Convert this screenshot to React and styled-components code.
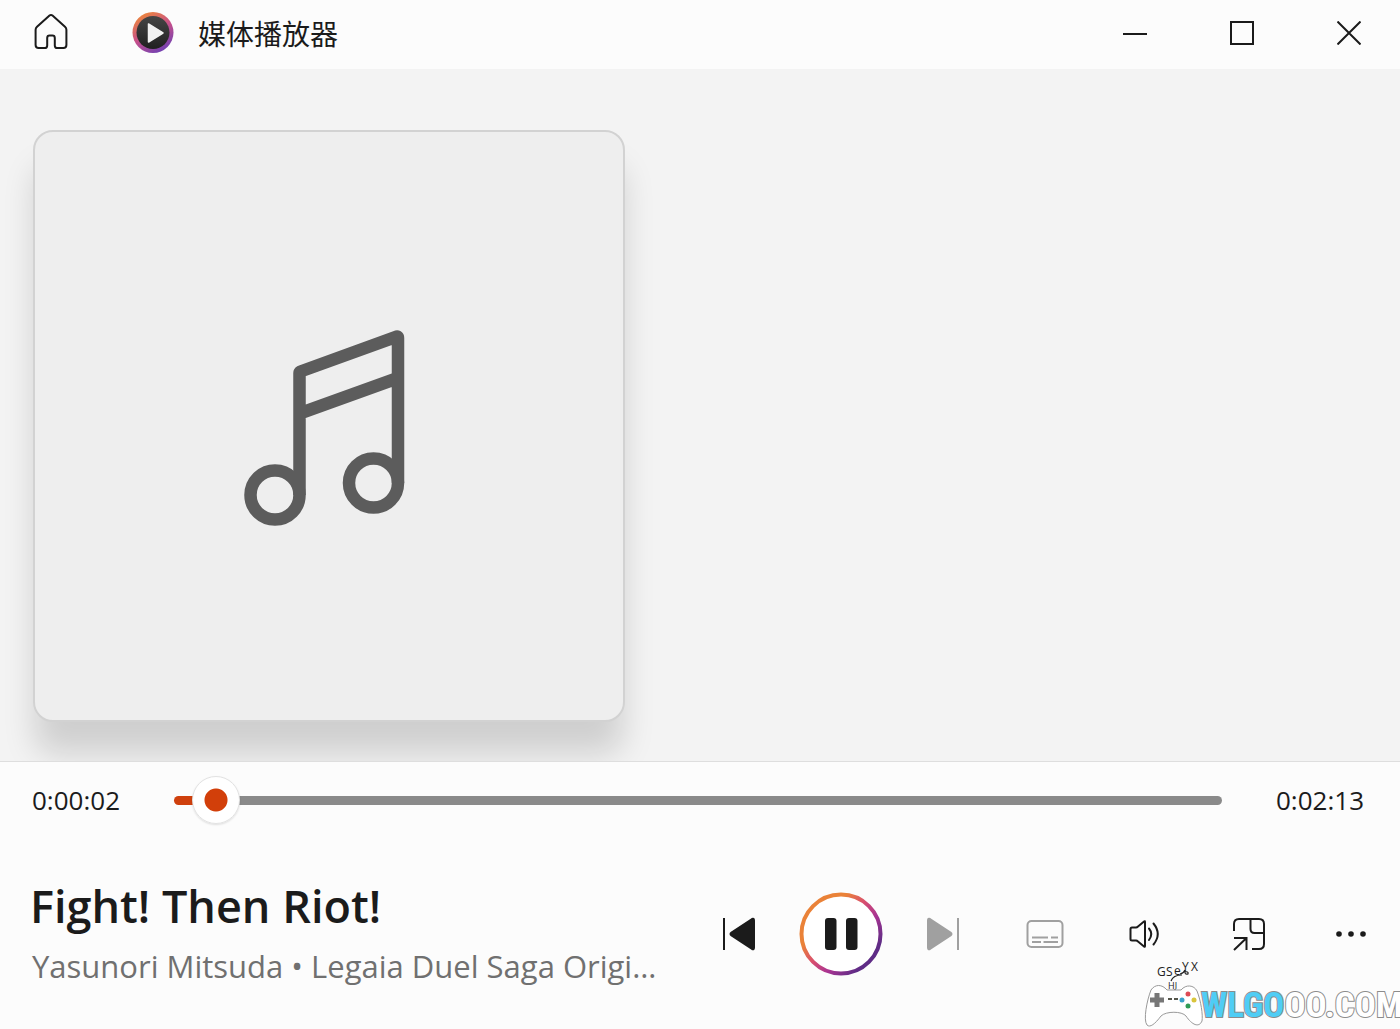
import React, { useState } from "react";
import styled, { createGlobalStyle } from "styled-components";

const GlobalStyle = createGlobalStyle`
  * {
    box-sizing: border-box;
  }
  body {
    margin: 0;
    background: #f3f3f3;
    color: #1b1b1b;
    font-family: "Open Sans", "Noto Sans", "Noto Sans CJK SC", sans-serif;
  }
`;

const Window = styled.div`
  position: relative;
  display: flex;
  flex-direction: column;
  min-height: 100vh;
`;

const TitleBar = styled.header`
  display: flex;
  align-items: center;
  height: 69px;
  padding-bottom: 4px;
  background: #fcfcfc;
`;

const IconButton = styled.button`
  display: flex;
  align-items: center;
  justify-content: center;
  flex: none;
  width: ${({ $width }) => $width || 98}px;
  height: ${({ $height }) => $height || 84}px;
  padding: 0;
  border: 0;
  background: transparent;
  color: ${({ disabled }) => (disabled ? "#a0a0a0" : "#1b1b1b")};
`;

const AppName = styled.div`
  display: flex;
  flex: 1;
  align-items: center;
  gap: 24px;
  padding-left: 30px;
  font-family: "Noto Sans CJK SC", sans-serif;
  font-size: 28px;
  line-height: 40px;
`;

const WindowButtons = styled.div`
  display: flex;
  gap: 5px;
`;

const Stage = styled.main`
  flex: 1;
  padding: 61px 33px 39px;
  overflow: hidden;
  background: #f3f3f3;
`;

const AlbumArt = styled.div`
  display: flex;
  align-items: center;
  justify-content: center;
  width: 592px;
  max-width: 100%;
  aspect-ratio: 1;
  border: 2px solid #d2d2d2;
  border-radius: 20px;
  background: #eeeeee;
  box-shadow: 0 34px 32px -2px rgba(0, 0, 0, 0.15);
`;

const Player = styled.footer`
  border-top: 1px solid #dedede;
  background: #fcfcfc;
`;

const SeekRow = styled.div`
  display: flex;
  align-items: center;
  gap: 54px;
  height: 76px;
  padding: 0 36px 0 32px;
`;

const Time = styled.time`
  flex: none;
  font-size: 26px;
  line-height: 36px;
`;

const Seek = styled.input`
  flex: 1;
  min-width: 0;
  height: 48px;
  margin: 0;
  appearance: none;
  background: transparent;

  &::-webkit-slider-runnable-track {
    height: 9px;
    border-radius: 5px;
    background: linear-gradient(
      to right,
      #cf400d ${({ $played }) => $played}%,
      #8a8a8a ${({ $played }) => $played}%
    );
  }

  &::-webkit-slider-thumb {
    appearance: none;
    width: 48px;
    height: 48px;
    margin-top: -20px;
    border: 1px solid #e2e2e2;
    border-radius: 50%;
    background: radial-gradient(circle, #d23f0a 11px, #ffffff 12px);
    box-shadow: 0 1px 2px rgba(0, 0, 0, 0.12);
  }
`;

const ControlRow = styled.div`
  display: flex;
  align-items: center;
  justify-content: space-between;
  height: 191px;
  padding-left: 30px;
`;

const Track = styled.div`
  flex: 1;
  min-width: 0;
  max-width: 632px;
  padding-top: 4px;
`;

const TrackTitle = styled.h1`
  margin: 0;
  font-size: 45px;
  font-weight: 600;
  line-height: 60px;
  white-space: nowrap;
`;

const TrackInfo = styled.p`
  margin: 0;
  padding-left: 2px;
  overflow: hidden;
  color: #707070;
  font-size: 31px;
  line-height: 60px;
  text-overflow: ellipsis;
  white-space: nowrap;
`;

const Controls = styled.div`
  display: flex;
  flex: none;
  gap: 4px;
`;

const Watermark = styled.div`
  position: absolute;
  right: 0;
  bottom: 0;
  pointer-events: none;

  svg {
    display: block;
    overflow: visible;
  }
`;

const Stroke = ({ width, height, weight = 2, children }) => (
  <svg
    width={width}
    height={height}
    viewBox={`0 0 ${width} ${height}`}
    fill="none"
    stroke="currentColor"
    strokeWidth={weight}
    aria-hidden="true"
  >
    {children}
  </svg>
);

const HomeIcon = () => (
  <Stroke width={36} height={42}>
    <path
      d="M16.5 3.6q1.5-1.3 3 0L32 14.8q1.4 1.3 1.4 3V33q0 3-3 3h-6q-2.6 0-2.6-2.6V26q0-2.4-2.4-2.4h-2.8q-2.4 0-2.4 2.4v7.4q0 2.6-2.6 2.6h-6q-3 0-3-3V17.8q0-1.7 1.4-3z"
      strokeLinejoin="round"
    />
  </Stroke>
);

const AppLogo = () => (
  <svg width="42" height="42" viewBox="0 0 42 42" aria-hidden="true">
    <defs>
      <linearGradient id="logoRing" x1="0.2" y1="0" x2="0.75" y2="1">
        <stop offset="0" stopColor="#ef8a35" />
        <stop offset="0.5" stopColor="#c8508a" />
        <stop offset="1" stopColor="#6b3fb5" />
      </linearGradient>
      <linearGradient id="logoFace" x1="0" y1="0" x2="0" y2="1">
        <stop offset="0" stopColor="#454545" />
        <stop offset="1" stopColor="#202020" />
      </linearGradient>
    </defs>
    <circle cx="21" cy="20.5" r="20.5" fill="url(#logoRing)" />
    <circle cx="21" cy="20.5" r="16.5" fill="url(#logoFace)" />
    <path
      d="M16.5 12v18L31 21z"
      fill="#f1f1f1"
      stroke="#f1f1f1"
      strokeWidth="1.5"
      strokeLinejoin="round"
    />
  </svg>
);

const MinimizeIcon = () => (
  <Stroke width={24} height={24}>
    <path d="M0 13h24" />
  </Stroke>
);

const MaximizeIcon = () => (
  <Stroke width={24} height={24}>
    <rect x="1" y="1" width="22" height="22" />
  </Stroke>
);

const CloseIcon = () => (
  <Stroke width={24} height={24}>
    <path d="M0.5 0.5l23 23M23.5 0.5l-23 23" />
  </Stroke>
);

const NoteIcon = () => (
  <svg
    width="176"
    height="206"
    viewBox="0 0 176 206"
    fill="none"
    stroke="#5c5c5c"
    strokeWidth="12.5"
    strokeLinejoin="round"
    aria-hidden="true"
  >
    <circle cx="34" cy="172" r="24.5" />
    <circle cx="132.5" cy="160" r="24.5" />
    <path d="M58.5 172V50q0-1 1-1.5L155 13.8q2-1 2 1.2v145M58.5 90.5L157 55" />
  </svg>
);

const PreviousIcon = () => (
  <Stroke width={34} height={34}>
    <path d="M2 1v32" />
    <path d="M32 3.5v27q0 2.5-2 1.5L9.5 18.5q-2-1.5 0-3L30 2q2-1 2 1.5z" fill="currentColor" />
  </Stroke>
);

const NextIcon = () => (
  <Stroke width={34} height={34}>
    <path d="M32 1v32" />
    <path d="M2 3.5v27q0 2.5 2 1.5l20.5-13.5q2-1.5 0-3L4 2Q2 1 2 3.5z" fill="currentColor" />
  </Stroke>
);

const PauseIcon = () => (
  <svg width="84" height="84" viewBox="0 0 84 84" aria-hidden="true">
    <defs>
      <linearGradient id="pauseRing" x1="0.15" y1="0.2" x2="0.85" y2="0.8">
        <stop offset="0.2" stopColor="#ea8238" />
        <stop offset="0.45" stopColor="#d94f6e" />
        <stop offset="0.7" stopColor="#a93492" />
        <stop offset="1" stopColor="#5f2c86" />
      </linearGradient>
    </defs>
    <circle cx="42" cy="42" r="39.5" fill="#ffffff" stroke="url(#pauseRing)" strokeWidth="4" />
    <rect x="26" y="26" width="11.5" height="32" rx="3" fill="#1b1b1b" />
    <rect x="47" y="26" width="11.5" height="32" rx="3" fill="#1b1b1b" />
  </svg>
);

const CaptionsIcon = () => (
  <Stroke width={38} height={30}>
    <rect x="1.5" y="2" width="35" height="26" rx="4" />
    <path d="M6 18.5h16M25 18.5h7M6 23h9M17.5 23H32" />
  </Stroke>
);

const VolumeIcon = () => (
  <Stroke width={38} height={30}>
    <path
      d="M4 8.5h4q1 0 2-1L16 2.5q1-.8 1 .5v24q0 1.3-1 .5l-6-5q-1-1-2-1H4q-1.5 0-1.5-1.5V10q0-1.5 1.5-1.5z"
      strokeLinejoin="round"
    />
    <path d="M21 9.5q4.5 5.5 0 11.5M25.5 4.5q8.5 10.5 0 21" strokeLinecap="round" />
  </Stroke>
);

const MiniPlayerIcon = () => (
  <Stroke width={34} height={34}>
    <path d="M2 14V7q0-5 5-5h20q5 0 5 5v20q0 5-5 5h-7" />
    <path d="M18.5 2v10q0 4 4 4H32M2 21h12.5v12M14.5 21L2 33" />
  </Stroke>
);

const MoreIcon = () => (
  <svg width="32" height="8" viewBox="0 0 32 8" fill="currentColor" aria-hidden="true">
    <circle cx="4" cy="4" r="2.8" />
    <circle cx="16" cy="4" r="2.8" />
    <circle cx="28" cy="4" r="2.8" />
  </svg>
);

const SiteMark = () => (
  <svg width="260" height="71" viewBox="0 0 260 71" role="img" aria-label="WLGOOO.COM">
    <g fill="#222" fontFamily="Open Sans, sans-serif" fontSize="12">
      <text x="17" y="18">G</text>
      <text x="26" y="18">S</text>
      <text x="34" y="17">e</text>
      <text x="42" y="13">Y</text>
      <text x="51" y="13">X</text>
      <text x="28" y="31" fontSize="9">HJ</text>
    </g>
    <path
      d="M31 23q2-6 11-6M40 16q4-1 5-4M45 12q-1 5 3 4q1-3-4-2"
      fill="none"
      stroke="#222"
      strokeWidth="1.2"
    />
    <path
      d="M11 32C15 26 22 26 27 32H41C46 26 54 27 57 33C61 43 63 57 62 63C59 70 52 67 46 58C42 53 26 53 21 58C15 66 10 70 7 67C3 62 7 42 11 32z"
      fill="#fff"
      stroke="#999"
    />
    <path d="M17 35v14M10 42h14" stroke="#777" strokeWidth="5" />
    <path d="M28 41h4M34 41h4" stroke="#55554a" strokeWidth="2" />
    <circle cx="42" cy="42" r="2.5" fill="#3ba1c9" />
    <circle cx="48" cy="36" r="2.5" fill="#dd4b55" />
    <circle cx="54" cy="42" r="2.5" fill="#d9c53b" />
    <circle cx="48" cy="48" r="2.5" fill="#2f9b55" />
    <text
      x="61"
      y="59"
      fill="#fff"
      stroke="#8c8c8c"
      strokeWidth="2"
      paintOrder="stroke"
      fontFamily="Roboto Condensed, Open Sans Condensed, Liberation Sans Narrow, DejaVu Sans Condensed, sans-serif"
      fontSize="35"
      fontWeight="700"
    >
      <tspan fill="#4fcdf5">WLGO</tspan>OO.COM
    </text>
  </svg>
);

const formatTime = (ms) => {
  const seconds = Math.floor(ms / 1000);
  const pad = (n) => String(n).padStart(2, "0");
  return `${Math.floor(seconds / 3600)}:${pad(Math.floor(seconds / 60) % 60)}:${pad(seconds % 60)}`;
};

const DURATION = 133000;

const App = () => {
  const [position, setPosition] = useState(2400);

  return (
    <>
      <GlobalStyle />
      <Window>
        <TitleBar>
          <IconButton $width={102} $height={64} aria-label="主页">
            <HomeIcon />
          </IconButton>
          <AppName>
            <AppLogo />
            <span>媒体播放器</span>
          </AppName>
          <WindowButtons>
            <IconButton $width={102} $height={64} aria-label="最小化">
              <MinimizeIcon />
            </IconButton>
            <IconButton $width={102} $height={64} aria-label="最大化">
              <MaximizeIcon />
            </IconButton>
            <IconButton $width={102} $height={64} aria-label="关闭">
              <CloseIcon />
            </IconButton>
          </WindowButtons>
        </TitleBar>
        <Stage>
          <AlbumArt>
            <NoteIcon />
          </AlbumArt>
        </Stage>
        <Player>
          <SeekRow>
            <Time>{formatTime(position)}</Time>
            <Seek
              type="range"
              aria-label="进度"
              min="0"
              max={DURATION}
              value={position}
              $played={(position / DURATION) * 96 + 2}
              onChange={(e) => setPosition(Number(e.target.value))}
            />
            <Time>{formatTime(DURATION)}</Time>
          </SeekRow>
          <ControlRow>
            <Track>
              <TrackTitle>Fight! Then Riot!</TrackTitle>
              <TrackInfo>Yasunori Mitsuda • Legaia Duel Saga Original Soundtrack</TrackInfo>
            </Track>
            <Controls>
              <IconButton aria-label="上一个">
                <PreviousIcon />
              </IconButton>
              <IconButton aria-label="暂停">
                <PauseIcon />
              </IconButton>
              <IconButton aria-label="下一个" disabled>
                <NextIcon />
              </IconButton>
              <IconButton aria-label="字幕" disabled>
                <CaptionsIcon />
              </IconButton>
              <IconButton aria-label="音量">
                <VolumeIcon />
              </IconButton>
              <IconButton aria-label="迷你播放器">
                <MiniPlayerIcon />
              </IconButton>
              <IconButton aria-label="更多选项">
                <MoreIcon />
              </IconButton>
            </Controls>
          </ControlRow>
        </Player>
        <Watermark>
          <SiteMark />
        </Watermark>
      </Window>
    </>
  );
};

export default App;
